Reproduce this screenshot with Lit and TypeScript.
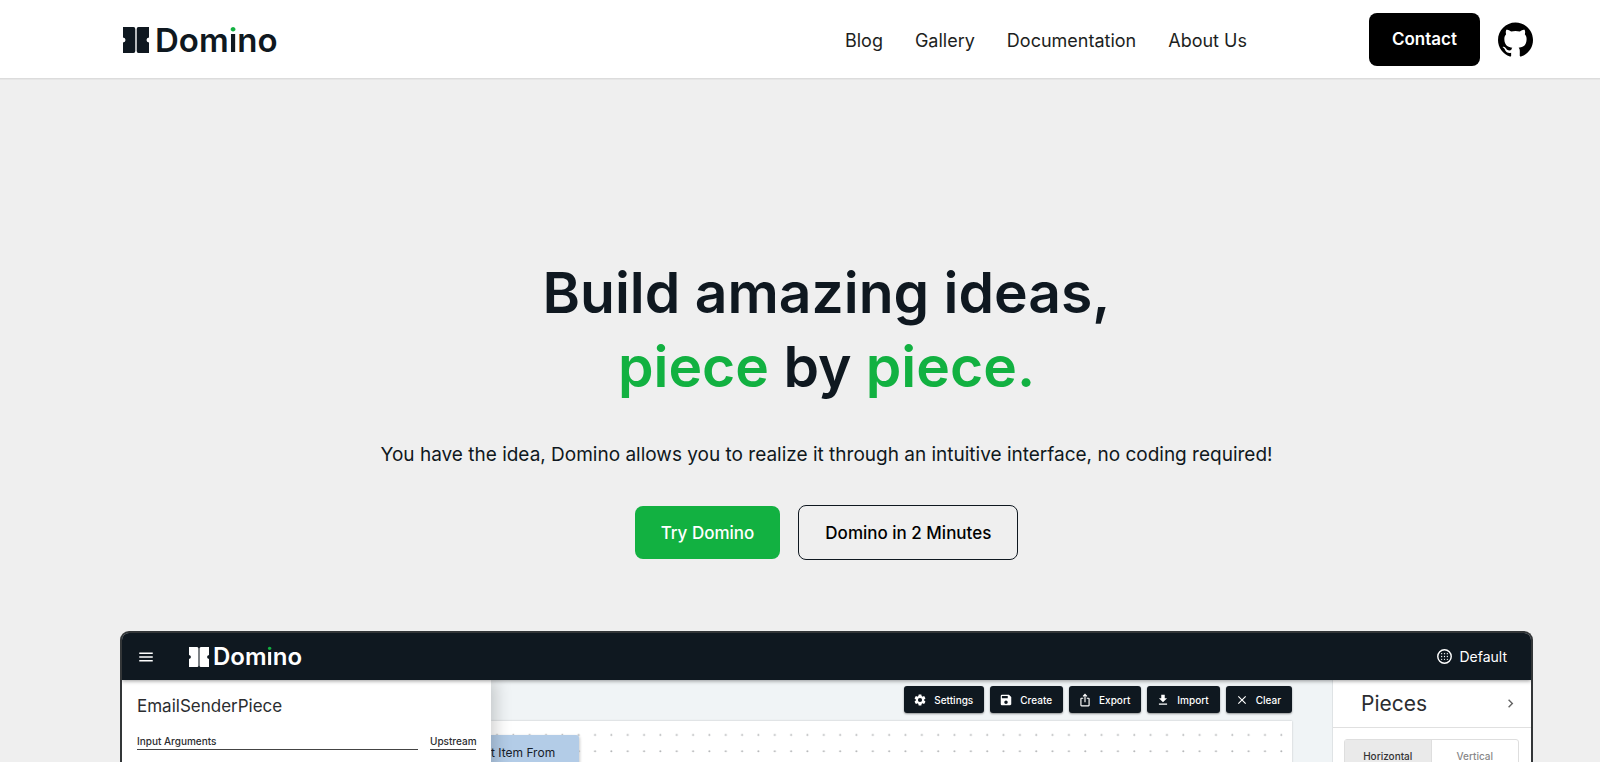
import { LitElement, html, css, svg } from "lit";
import { customElement, property } from "lit/decorators.js";

const icon = (body: unknown, size = 24) =>
  html`<svg viewBox="0 0 ${size} ${size}" fill="currentColor" aria-hidden="true">${body}</svg>`;

const icons = {
  settings: svg`<path d="M19.14 12.94c.04-.3.06-.61.06-.94 0-.32-.02-.64-.07-.94l2.03-1.58c.18-.14.23-.41.12-.61l-1.92-3.32c-.12-.22-.37-.29-.59-.22l-2.39.96c-.5-.38-1.03-.7-1.62-.94l-.36-2.54c-.04-.24-.24-.41-.48-.41h-3.84c-.24 0-.43.17-.47.41l-.36 2.54c-.59.24-1.13.57-1.62.94l-2.39-.96c-.22-.08-.47 0-.59.22L2.74 8.87c-.12.21-.08.47.12.61l2.03 1.58c-.05.3-.09.63-.09.94s.02.64.07.94l-2.03 1.58c-.18.14-.23.41-.12.61l1.92 3.32c.12.22.37.29.59.22l2.39-.96c.5.38 1.03.7 1.62.94l.36 2.54c.05.24.24.41.48.41h3.84c.24 0 .44-.17.47-.41l.36-2.54c.59-.24 1.13-.56 1.62-.94l2.39.96c.22.08.47 0 .59-.22l1.92-3.32c.12-.22.07-.47-.12-.61l-2.01-1.58zM12 15.6A3.6 3.6 0 1 1 12 8.4a3.6 3.6 0 0 1 0 7.2z"/>`,
  save: svg`<path d="M17 3H5a2 2 0 0 0-2 2v14a2 2 0 0 0 2 2h14c1.100 0 2-.9 2-2V7l-4-4zm-5 16a3 3 0 1 1 0-6 3 3 0 0 1 0 6zm3-10H5V5h10v4z"/>`,
  share: svg`<path d="m16 5-1.420 1.420-1.590-1.590V16h-1.980V4.830L9.420 6.420 8 5l4-4 4 4zm4 5v11c0 1.100-.9 2-2 2H6a2 2 0 0 1-2-2V10c0-1.110.89-2 2-2h3v2H6v11h12V10h-3V8h3a2 2 0 0 1 2 2z"/>`,
  download: svg`<path d="M19 9h-4V3H9v6H5l7 7 7-7zM5 18v2h14v-2H5z"/>`,
  clear: svg`<path d="M19 6.410 17.590 5 12 10.590 6.410 5 5 6.410 10.590 12 5 17.590 6.410 19 12 13.410 17.590 19 19 17.590 13.410 12z"/>`,
  menu: svg`<path d="M3 18h18v-2H3v2zm0-5h18v-2H3v2zm0-7v2h18V6H3z"/>`,
  chevron: svg`<path d="M10 6 8.590 7.410 13.170 12l-4.580 4.590L10 18l6-6z"/>`,
  workspace: svg`<circle cx="12" cy="12" r="9.500" fill="none" stroke="currentColor" stroke-width="2"/>
    ${[8, 12, 16].flatMap((x) => [8, 12, 16].map((y) => svg`<circle cx=${x} cy=${y} r=".9"/>`))}`,
  github: svg`<path d="M12 .297c-6.630 0-12 5.373-12 12 0 5.303 3.438 9.800 8.205 11.385.6.113.82-.258.82-.577 0-.285-.01-1.040-.015-2.040-3.338.724-4.042-1.610-4.042-1.610C4.422 18.070 3.633 17.700 3.633 17.700c-1.087-.744.084-.729.084-.729 1.205.084 1.838 1.236 1.838 1.236 1.070 1.835 2.809 1.305 3.495.998.108-.776.417-1.305.76-1.605-2.665-.3-5.466-1.332-5.466-5.930 0-1.310.465-2.380 1.235-3.220-.135-.303-.54-1.523.105-3.176 0 0 1.005-.322 3.300 1.230.96-.267 1.980-.399 3-.405 1.020.006 2.040.138 3 .405 2.280-1.552 3.285-1.230 3.285-1.230.645 1.653.24 2.873.12 3.176.765.84 1.230 1.910 1.230 3.220 0 4.610-2.805 5.625-5.475 5.920.42.360.81 1.096.81 2.220 0 1.606-.015 2.896-.015 3.286 0 .315.21.690.825.570C20.565 22.092 24 17.592 24 12.297c0-6.627-5.373-12-12-12"/>`,
};

@customElement("domino-logo")
export class DominoLogo extends LitElement {
  static styles = css`
    :host {
      --size: 33px;
      --mark: 26px;
      --gap: 6px;
      display: inline-flex;
      align-items: center;
      gap: var(--gap);
      color: #0f1820;
      font: 600 var(--size) / 1 Inter, sans-serif;
    }
    :host([small]) {
      --size: 24px;
      --mark: 20px;
      --gap: 4px;
      color: #fff;
    }
    .mark {
      width: var(--mark);
      height: var(--mark);
      fill: currentColor;
    }
    .dotted {
      background: linear-gradient(#12b141 34%, currentColor 34%);
      background-clip: text;
      -webkit-background-clip: text;
      -webkit-text-fill-color: transparent;
    }
  `;
  render() {
    return html`<svg class="mark" viewBox="0 0 26 26" aria-hidden="true">
        <path d="M0 0h10.500q1.800 0 1.800 2v22q0 2-1.800 2H0V15.500q2.500-.4 2.500-2.500T0 10.500z" />
        <path d="M26 0H15.500q-1.800 0-1.800 2v22q0 2 1.800 2H26V15.500q-2.500-.4-2.500-2.500t2.500-2.500z" />
      </svg>
      <span>Dom<span class="dotted">i</span>no</span>`;
  }
}

@customElement("editor-preview")
export class EditorPreview extends LitElement {
  @property({ attribute: false }) actions = [
    { label: "Settings", icon: icons.settings },
    { label: "Create", icon: icons.save },
    { label: "Export", icon: icons.share },
    { label: "Import", icon: icons.download },
    { label: "Clear", icon: icons.clear },
  ];

  static styles = css`
    :host {
      display: flex;
      flex-direction: column;
      box-sizing: border-box;
      border: 2px solid #333638;
      border-bottom: 0;
      border-radius: 9px 9px 0 0;
      overflow: hidden;
      background: #f0f4f6;
      color: #2b2d30;
    }
    button {
      font: inherit;
      color: inherit;
      border: 0;
      padding: 0;
      margin: 0;
      background: none;
      cursor: pointer;
    }
    svg {
      display: block;
    }
    h2 {
      margin: 0;
      font-weight: 400;
    }
    .bar {
      display: flex;
      align-items: center;
      height: 47px;
      padding: 0 24px 0 15px;
      background: #0f1820;
      color: #fff;
      box-shadow: 0 1px 4px #0006;
      z-index: 3;
    }
    .menu svg {
      width: 18px;
      height: 18px;
    }
    .bar domino-logo {
      margin-left: 34px;
    }
    .workspace {
      display: flex;
      align-items: center;
      gap: 6px;
      margin-left: auto;
      font-size: 14px;
    }
    .workspace svg {
      width: 17px;
      height: 17px;
    }
    .body {
      flex: 1;
      display: grid;
      grid-template-columns: 369px 1fr 199px;
      min-height: 0;
    }
    .form {
      padding: 16px 15px 0;
      background: #fff;
      box-shadow: 4px 0 16px #0003;
      z-index: 2;
    }
    .form h2 {
      font-size: 17px;
      line-height: 20px;
    }
    .columns {
      display: grid;
      grid-template-columns: 1fr 46px;
      gap: 12px;
      margin-top: 17px;
      font-size: 10px;
      line-height: 16px;
      font-weight: 500;
    }
    .columns span {
      border-bottom: 1px solid #444;
      white-space: nowrap;
    }
    .main {
      display: flex;
      flex-direction: column;
      min-width: 0;
      padding: 6px 40px 0 0;
    }
    .actions {
      display: flex;
      justify-content: flex-end;
      gap: 6px;
      color: #fff;
    }
    .actions button {
      display: flex;
      align-items: center;
      gap: 7px;
      height: 27px;
      padding: 0 11px 0 9px;
      border-radius: 3px;
      background: #0f1820;
      font-size: 10px;
      font-weight: 500;
      box-shadow: 0 1px 2px #0006;
    }
    .actions svg {
      width: 14px;
      height: 14px;
    }
    .canvas {
      position: relative;
      flex: 1;
      margin-top: 8px;
      background: #fff;
      box-shadow: 0 0 2px #0003;
      overflow: hidden;
    }
    .dots {
      width: 100%;
      height: 100%;
    }
    .node {
      position: absolute;
      top: 14px;
      left: 0;
      width: 88px;
      height: 60px;
      box-sizing: border-box;
      padding-top: 9px;
      border-radius: 0 3px 3px 0;
      background: #b3cce7;
      box-shadow: 1px 1px 3px #0003;
      color: #17202a;
      font-size: 12px;
      line-height: 18px;
      white-space: nowrap;
    }
    .pieces {
      box-sizing: border-box;
      border-left: 1px solid #dfe3e5;
      background: #fff;
    }
    .head {
      display: flex;
      align-items: center;
      justify-content: space-between;
      height: 47px;
      padding: 0 12px 0 28px;
      border-bottom: 1px solid #e0e0e0;
    }
    .head h2 {
      font-size: 21px;
    }
    .head svg {
      width: 17px;
      height: 17px;
      color: #666;
    }
    .toggle {
      display: grid;
      grid-template-columns: 1fr 1fr;
      height: 32px;
      margin: 11px 12px 0 11px;
      border: 1px solid #dedede;
      border-radius: 3px;
      font-size: 10px;
      line-height: 12px;
      font-weight: 500;
      color: #888;
    }
    .toggle .on {
      background: #eaeaea;
      border-right: 1px solid #dedede;
      color: #333;
    }
  `;

  render() {
    return html`
      <div class="bar">
        <button class="menu" aria-label="Menu">${icon(icons.menu)}</button>
        <domino-logo small></domino-logo>
        <button class="workspace">${icon(icons.workspace)}Default</button>
      </div>
      <div class="body">
        <section class="form">
          <h2>EmailSenderPiece</h2>
          <div class="columns"><span>Input Arguments</span><span>Upstream</span></div>
        </section>
        <section class="main">
          <div class="actions">
            ${this.actions.map((a) => html`<button>${icon(a.icon)}${a.label}</button>`)}
          </div>
          <div class="canvas">
            <svg class="dots" aria-hidden="true">
              <pattern id="dot" x="-2" y="6" width="16.340" height="16.340" patternUnits="userSpaceOnUse">
                <circle cx="8" cy="8" r="1" fill="#b4b6b8" />
              </pattern>
              <rect width="100%" height="100%" fill="url(#dot)" />
            </svg>
            <div class="node">t Item From</div>
          </div>
        </section>
        <aside class="pieces">
          <div class="head">
            <h2>Pieces</h2>
            <button aria-label="Collapse">${icon(icons.chevron)}</button>
          </div>
          <div class="toggle">
            <button class="on">Horizontal</button>
            <button>Vertical</button>
          </div>
        </aside>
      </div>
    `;
  }
}

@customElement("app-root")
export class AppRoot extends LitElement {
  static styles = css`
    :host {
      --gutter: 0 67px 0 120px;
      display: flex;
      flex-direction: column;
      height: 100vh;
      overflow: hidden;
      background: #efefef;
      color: #0f1820;
      font-family: Inter, sans-serif;
    }
    a {
      color: inherit;
      text-decoration: none;
    }
    .header {
      display: flex;
      align-items: center;
      height: 78px;
      padding: var(--gutter);
      background: #fff;
      border-bottom: 1px solid #dcdcdc;
      box-shadow: 0 1px 0 #e6e6e6;
    }
    .brand,
    .nav {
      display: flex;
      padding-top: 2px;
    }
    .brand {
      margin-left: 3px;
    }
    .nav {
      gap: 32px;
      margin-left: auto;
      margin-right: 122px;
      font-size: 18px;
      color: #1c1e21;
    }
    .button {
      display: flex;
      align-items: center;
      justify-content: center;
      box-sizing: border-box;
      height: 53px;
      padding: 0 26px;
      border-radius: 8px;
      font-size: 17px;
      font-weight: 500;
    }
    .contact {
      padding: 0 23px;
      background: #000;
      color: #fff;
      font-weight: 600;
    }
    .github {
      margin-left: 18px;
      color: #000;
    }
    .github svg {
      display: block;
      width: 35px;
      height: 35px;
    }
    .main {
      flex: 1;
      display: flex;
      flex-direction: column;
      min-height: 0;
      padding: var(--gutter);
    }
    .hero {
      display: flex;
      flex-direction: column;
      align-items: center;
      padding: 177px 0 71px;
      text-align: center;
    }
    h1 {
      margin: 0;
      font-size: 57px;
      line-height: 74px;
      font-weight: 600;
    }
    .green {
      color: #12b141;
    }
    .lead {
      margin: 37px 0 36px;
      font-size: 19px;
      line-height: 28px;
    }
    .cta {
      display: flex;
      align-items: center;
      gap: 18px;
    }
    .try {
      background: #12b141;
      color: #fff;
    }
    .video {
      height: 55px;
      border: 1px solid #0f1820;
      color: #000;
    }
    .preview {
      flex: 1;
      min-height: 0;
    }
  `;

  render() {
    return html`
      <header class="header">
        <a class="brand" href="#" aria-label="Domino"><domino-logo></domino-logo></a>
        <nav class="nav">
          ${["Blog", "Gallery", "Documentation", "About Us"].map((t) => html`<a href="#">${t}</a>`)}
        </nav>
        <a class="button contact" href="#">Contact</a>
        <a class="github" href="#" aria-label="GitHub">${icon(icons.github)}</a>
      </header>
      <main class="main">
        <section class="hero">
          <h1>
            Build amazing ideas,<br /><span class="green">piece</span> by
            <span class="green">piece.</span>
          </h1>
          <p class="lead">
            You have the idea, Domino allows you to realize it through an intuitive interface, no
            coding required!
          </p>
          <div class="cta">
            <a class="button try" href="#">Try Domino</a>
            <a class="button video" href="#">Domino in 2 Minutes</a>
          </div>
        </section>
        <editor-preview class="preview"></editor-preview>
      </main>
    `;
  }
}
